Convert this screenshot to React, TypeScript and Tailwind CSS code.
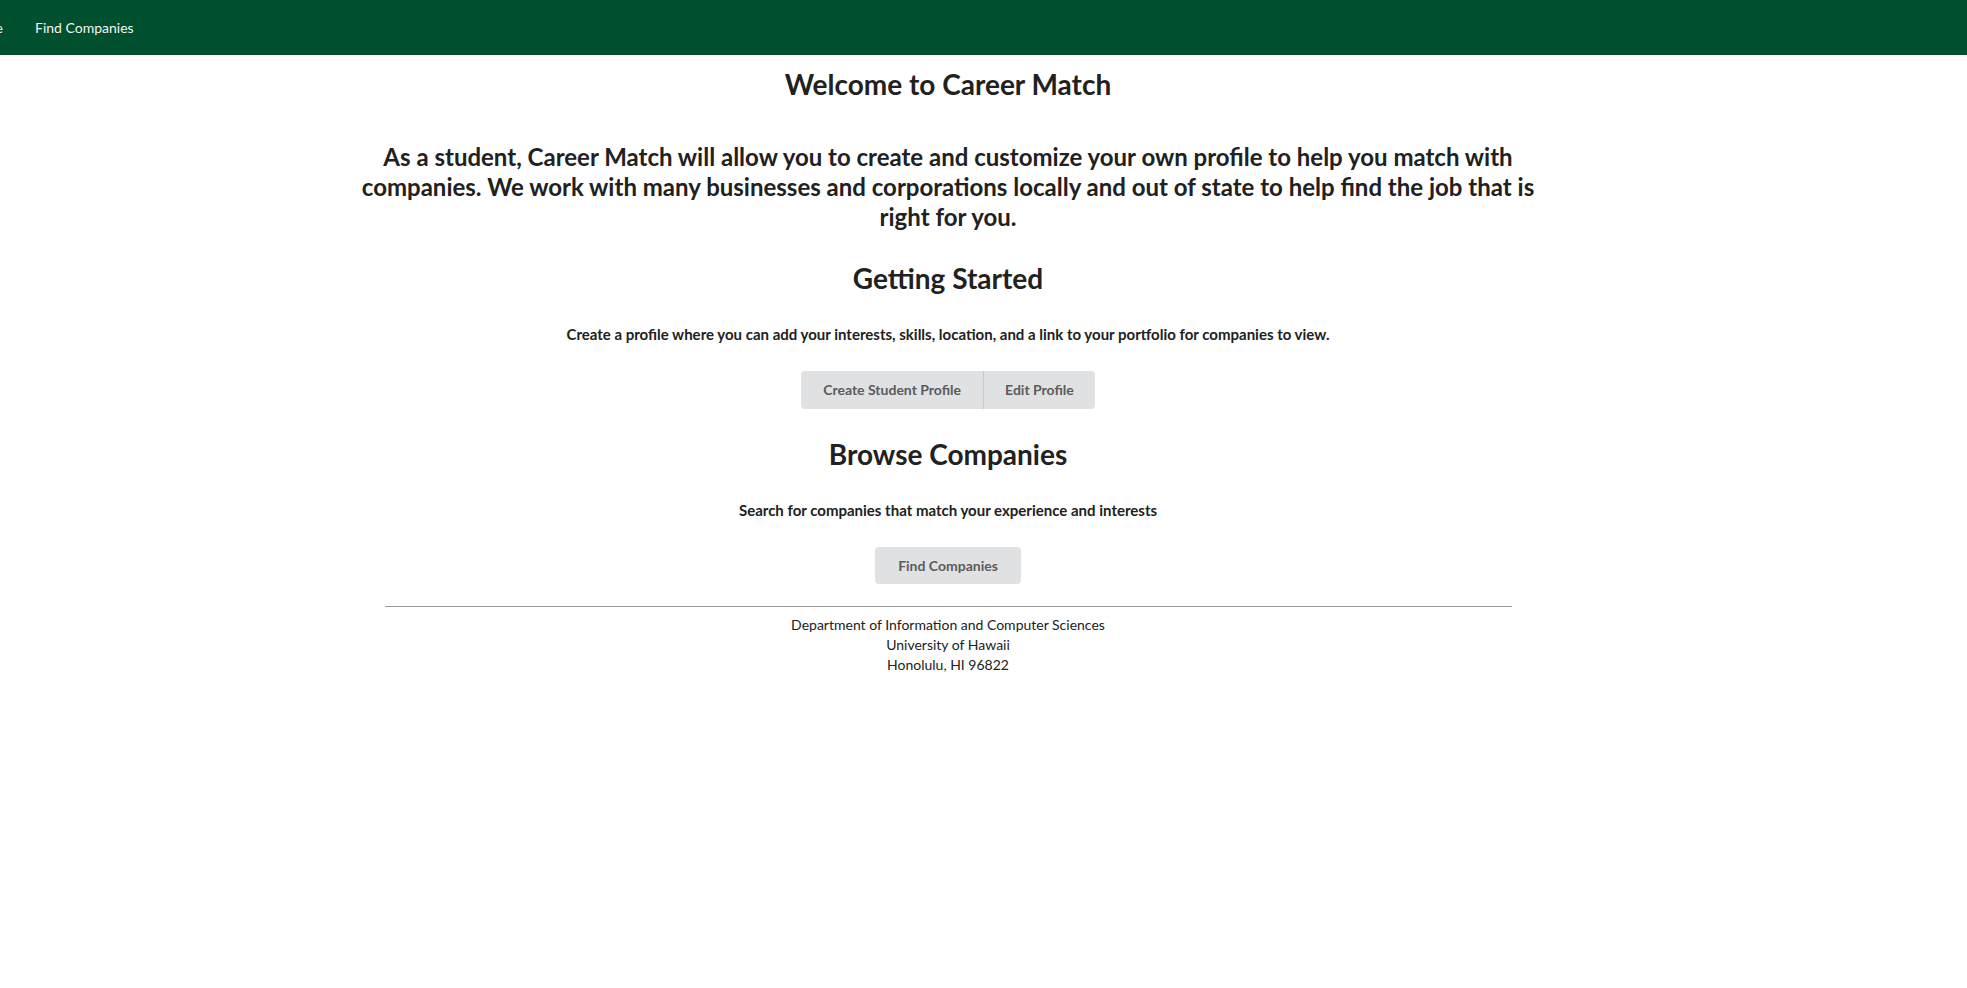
import React from "react";

const font = { fontFamily: "Lato, 'Noto Sans', sans-serif" };

const NavBar: React.FC = () => (
  <div className="flex h-[55px] items-center bg-[#00502f] text-[14px] leading-[20px] text-[#f4f4f4]">
    <div className="flex w-[3px] justify-end">
      <span className="whitespace-nowrap">Home</span>
    </div>
    <span className="ml-[32px] whitespace-nowrap">Find Companies</span>
  </div>
);

const App: React.FC = () => {
  return (
    <div className="min-h-[988px] bg-white text-[#212121]" style={font}>
      <NavBar />

      <div className="flex flex-col items-center pr-[71px] text-center">
        <h1 className="mt-[11px] text-[28px] font-bold leading-[36px]">
          Welcome to Career Match
        </h1>

        <p className="mt-[40px] w-[1190px] text-[24px] font-bold leading-[30px]">
          As a student, Career Match will allow you to create and customize your
          own profile to help you match with companies. We work with many
          businesses and corporations locally and out of state to help find the
          job that is right for you.
        </p>

        <h1 className="mt-[28px] text-[28px] font-bold leading-[36px]">
          Getting Started
        </h1>
        <p className="mt-[28px] text-[15px] font-bold leading-[20px]">
          Create a profile where you can add your interests, skills, location,
          and a link to your portfolio for companies to view.
        </p>
        <div className="mt-[27px] flex">
          <button className="h-[38px] rounded-l-[4px] bg-[#e0e1e2] px-[22px] text-[14px] font-bold leading-[14px] text-[#5b5b5c]">
            Create Student Profile
          </button>
          <button className="h-[38px] rounded-r-[4px] border-l border-[#c9cacb] bg-[#e0e1e2] px-[21px] text-[14px] font-bold leading-[14px] text-[#5b5b5c]">
            Edit Profile
          </button>
        </div>

        <h1 className="mt-[27px] text-[28px] font-bold leading-[36px]">
          Browse Companies
        </h1>
        <p className="mt-[28px] text-[15px] font-bold leading-[20px]">
          Search for companies that match your experience and interests
        </p>
        <button className="mt-[27px] h-[37px] rounded-[4px] bg-[#e0e1e2] px-[23px] text-[14px] font-bold leading-[14px] text-[#5b5b5c]">
          Find Companies
        </button>

        <div className="mt-[22px] w-[1127px] border-t border-[#9b9b9b] pt-[8px] text-[14px] leading-[20px] text-[#212121]">
          <div>Department of Information and Computer Sciences</div>
          <div>University of Hawaii</div>
          <div>Honolulu, HI 96822</div>
        </div>
      </div>
    </div>
  );
};

export default App;
